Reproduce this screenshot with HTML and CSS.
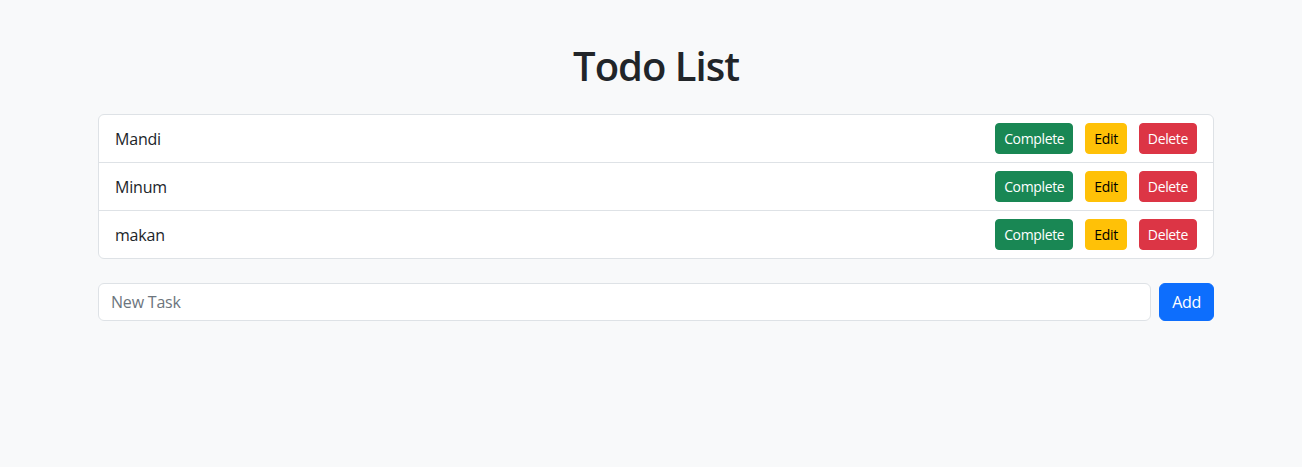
FILE: index.html
```html
<!DOCTYPE html>
<html lang="en">
<head>
<meta charset="utf-8">
<title>Todo List</title>
<link rel="stylesheet" href="styles.css">
</head>
<body>
<div class="container">
  <h1 class="title">Todo List</h1>
  <ul class="list">
    <li class="item">
      <span class="task">Mandi</span>
      <div class="actions">
        <button class="btn btn-sm btn-success">Complete</button>
        <button class="btn btn-sm btn-warning">Edit</button>
        <button class="btn btn-sm btn-danger">Delete</button>
      </div>
    </li>
    <li class="item">
      <span class="task">Minum</span>
      <div class="actions">
        <button class="btn btn-sm btn-success">Complete</button>
        <button class="btn btn-sm btn-warning">Edit</button>
        <button class="btn btn-sm btn-danger">Delete</button>
      </div>
    </li>
    <li class="item">
      <span class="task">makan</span>
      <div class="actions">
        <button class="btn btn-sm btn-success">Complete</button>
        <button class="btn btn-sm btn-warning">Edit</button>
        <button class="btn btn-sm btn-danger">Delete</button>
      </div>
    </li>
  </ul>
  <form class="add-form">
    <input class="input" type="text" placeholder="New Task">
    <button class="btn btn-primary" type="button">Add</button>
  </form>
</div>
</body>
</html>
```
FILE: styles.css
```css
* { box-sizing: border-box; }
html, body { margin: 0; padding: 0; }
body {
  background: #f8f9fa;
  color: #212529;
  font-family: "Open Sans", "Noto Sans", sans-serif;
  font-size: 16px;
  line-height: 1.5;
}
.container {
  width: 1116px;
  margin-left: 98px;
  padding-top: 42px;
}
.title {
  margin: 0 0 24px;
  font-size: 40px;
  line-height: 48px;
  font-weight: 600;
  letter-spacing: -1px;
  text-align: center;
  height: 48px;
}
.list {
  list-style: none;
  margin: 0;
  padding: 0;
  background: #fff;
  border: 1px solid #dee2e6;
  border-radius: 6px;
}
.item {
  display: flex;
  align-items: center;
  justify-content: space-between;
  padding: 8px 16px;
  height: 48px;
  border-bottom: 1px solid #dee2e6;
}
.list .item:last-child { border-bottom: 0; height: 47px; }
.task { font-size: 16px; letter-spacing: -0.2px; }
.actions { display: flex; gap: 12px; }
.btn {
  font-family: inherit;
  border: 1px solid transparent;
  border-radius: 6px;
  padding: 6px 12px;
  font-size: 16px;
  line-height: 24px;
  color: #fff;
  cursor: pointer;
  letter-spacing: -0.3px;
}
.btn-sm {
  padding: 4px 8px;
  font-size: 14px;
  line-height: 21px;
  border-radius: 4px;
  height: 31px;
  letter-spacing: -0.35px;
}
.btn-success { background: #198754; border-color: #198754; }
.btn-warning { background: #ffc107; border-color: #ffc107; color: #000; }
.btn-danger { background: #dc3545; border-color: #dc3545; }
.btn-primary { background: #0d6efd; border-color: #0d6efd; height: 38px; }
.add-form {
  display: flex;
  gap: 8px;
  margin-top: 24px;
}
.input {
  flex: 1;
  height: 38px;
  padding: 6px 12px;
  font-family: inherit;
  font-size: 16px;
  line-height: 24px;
  color: #212529;
  background: #fff;
  border: 1px solid #dee2e6;
  border-radius: 6px;
  outline: none;
  letter-spacing: -0.2px;
}
.input::placeholder { color: #6c757d; }
```
